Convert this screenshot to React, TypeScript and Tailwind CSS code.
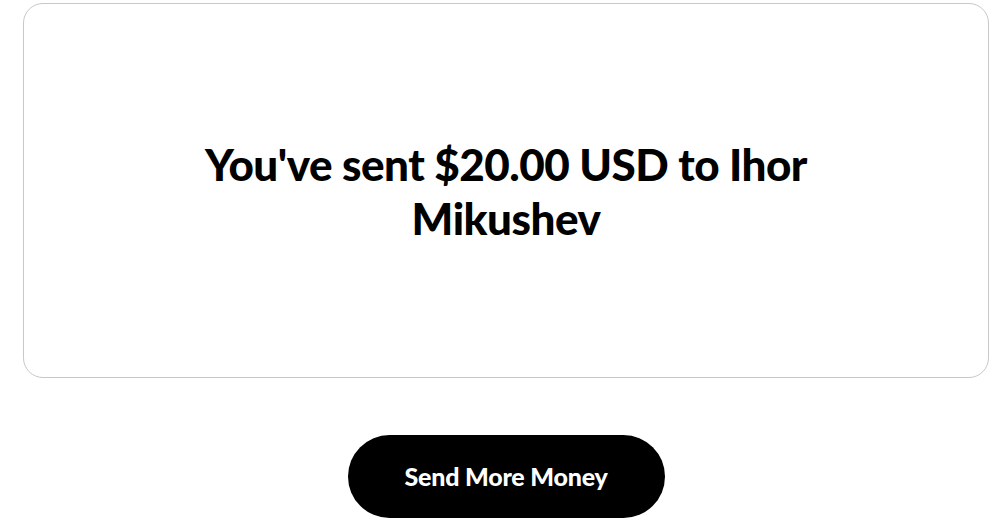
import React from "react";

export default function App() {
  return (
    <div className="w-[1000px] h-[531px] bg-white pl-[23px] pr-[11px] pt-[3px]" style={{ fontFamily: "Lato, 'Noto Sans', sans-serif" }}>
      <div className="h-[375px] rounded-[20px] border-[1.5px] border-[#c8c8c8] flex items-center justify-center">
        <h1 className="w-[660px] text-center text-[44px] leading-[54px] font-black text-black tracking-[-0.5px]">
          You've sent $20.00 USD to Ihor Mikushev
        </h1>
      </div>
      <div className="flex justify-center mt-[57px]">
        <button className="w-[317px] h-[83px] rounded-full bg-black text-white text-[25px] font-black tracking-[-0.2px]">
          Send More Money
        </button>
      </div>
    </div>
  );
}
